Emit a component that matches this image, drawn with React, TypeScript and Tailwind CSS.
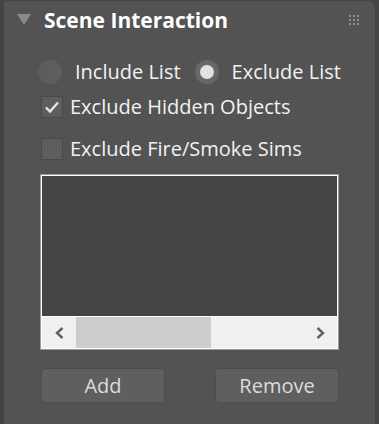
import React from "react";

const font = { fontFamily: '"Open Sans", "Noto Sans", sans-serif' };

function Grip() {
  return (
    <div className="grid grid-cols-3 gap-[2px]">
      {Array.from({ length: 9 }).map((_, i) => (
        <div key={i} className="h-[2px] w-[2px] bg-[#8e8e8e]" />
      ))}
    </div>
  );
}

function Radio({ checked, label }: { checked?: boolean; label: string }) {
  return (
    <div className="flex h-[24px] items-center">
      <div
        className={`flex h-[24px] w-[24px] items-center justify-center rounded-full ${
          checked ? "bg-[#686868]" : "bg-[#5d5d5d]"
        }`}
      >
        {checked && <div className="h-[14px] w-[14px] rounded-full bg-[#e2e2e2]" />}
      </div>
      <span className="ml-[13px] text-[20px] leading-[24px] text-[#f2f2f2]">{label}</span>
    </div>
  );
}

function Check({ checked, label }: { checked?: boolean; label: string }) {
  return (
    <div className="flex h-[22px] items-center">
      <div className="flex h-[22px] w-[22px] items-center justify-center border border-[#484848] bg-[#5e5e5e]">
        {checked && (
          <svg width="14" height="12" viewBox="0 0 14 12">
            <path d="M1 6.5 L5 10.5 L13 1.5" fill="none" stroke="#e6e6e6" strokeWidth="2.4" />
          </svg>
        )}
      </div>
      <span className="ml-[7px] text-[20px] leading-[22px] text-[#f2f2f2]">{label}</span>
    </div>
  );
}

export default function App() {
  return (
    <div className="h-[424px] w-[379px] bg-[#444444] pl-[4px] pr-[4px] pt-[1px]" style={font}>
      <div className="flex h-full flex-col rounded-tr-[6px] rounded-tl-[3px] bg-[#535353]">
        <div className="flex h-[37px] shrink-0 items-center pl-[13px] pr-[16px]">
          <svg width="14" height="11" viewBox="0 0 14 11">
            <path d="M0 0 H14 L7 11 Z" fill="#8a8a8a" />
          </svg>
          <span className="ml-[13px] text-[21px] font-bold leading-[24px] text-white">
            Scene Interaction
          </span>
          <div className="ml-auto">
            <Grip />
          </div>
        </div>

        <div className="flex flex-col pl-[34px] pt-[22px]">
          <div className="flex items-center gap-[14px]">
            <Radio label="Include List" />
            <Radio checked label="Exclude List" />
          </div>
          <div className="mt-[12px] pl-[3px]">
            <Check checked label="Exclude Hidden Objects" />
          </div>
          <div className="mt-[20px] pl-[3px]">
            <Check label="Exclude Fire/Smoke Sims" />
          </div>
        </div>

        <div className="ml-[36px] mt-[14px] w-[299px] border border-[#9a9a9a]">
          <div className="border border-white">
            <div className="h-[140px] bg-[#444444]" />
            <div className="flex h-[32px] items-center border-t border-white bg-[#f0f0f0]">
              <div className="flex w-[34px] justify-center">
                <svg width="9" height="12" viewBox="0 0 9 12">
                  <path d="M7.5 1 L2 6 L7.5 11" fill="none" stroke="#606060" strokeWidth="2.4" />
                </svg>
              </div>
              <div className="h-full w-[135px] bg-[#cdcdcd]" />
              <div className="ml-auto flex w-[34px] justify-center">
                <svg width="9" height="12" viewBox="0 0 9 12">
                  <path d="M1.5 1 L7 6 L1.5 11" fill="none" stroke="#606060" strokeWidth="2.4" />
                </svg>
              </div>
            </div>
          </div>
        </div>

        <div className="ml-[37px] mt-[18px] flex w-[298px] justify-between">
          <button className="h-[35px] w-[124px] rounded-[4px] border border-[#4d4d4d] bg-[#5f5f5f] text-[20px] leading-[33px] text-[#dcdcdc]">
            Add
          </button>
          <button className="h-[35px] w-[124px] rounded-[4px] border border-[#4d4d4d] bg-[#5f5f5f] text-[20px] leading-[33px] text-[#dcdcdc]">
            Remove
          </button>
        </div>
      </div>
    </div>
  );
}
